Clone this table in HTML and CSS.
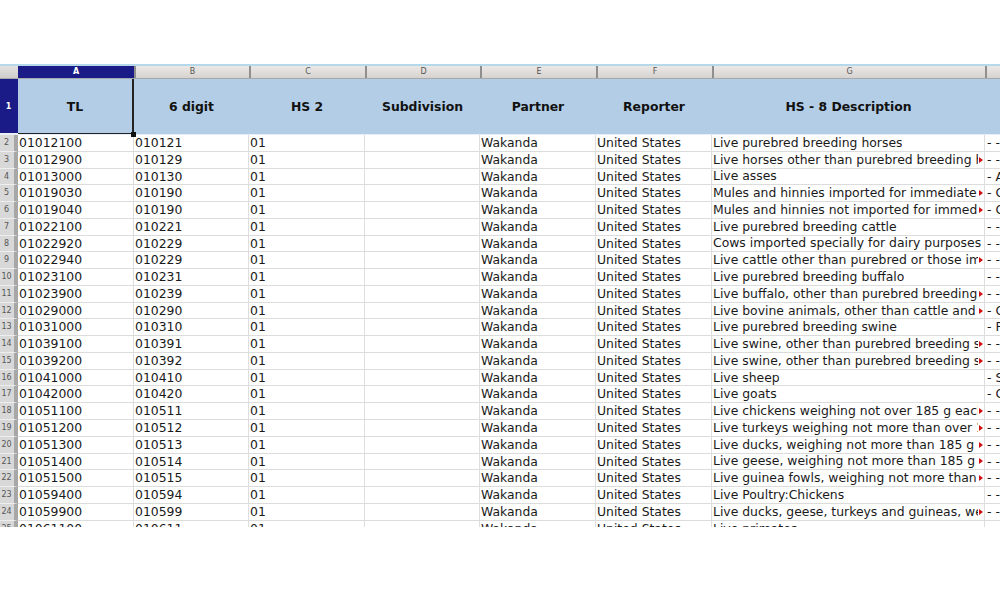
FILE: index.html
```html
<!DOCTYPE html>
<html>
<head>
<meta charset="utf-8">
<link rel="stylesheet" href="styles.css">
</head>
<body>
<div class="sheet">
  <div class="row letters">
    <div class="corner"></div>
    <div class="lt sel-lt">A</div>
    <div class="lt">B</div>
    <div class="lt">C</div>
    <div class="lt">D</div>
    <div class="lt">E</div>
    <div class="lt">F</div>
    <div class="lt">G</div>
    <div class="lt"></div>
  </div>
  <div class="row head">
    <div class="rn sel-rn">1</div>
    <div class="hc sel">TL</div>
    <div class="hc">6 digit</div>
    <div class="hc">HS 2</div>
    <div class="hc">Subdivision</div>
    <div class="hc">Partner</div>
    <div class="hc">Reporter</div>
    <div class="hc">HS - 8 Description</div>
    <div class="hc"></div>
  </div>
  <div class="row"><div class="rn">2</div><div class="c">01012100</div><div class="c">010121</div><div class="c">01</div><div class="c"></div><div class="c">Wakanda</div><div class="c">United States</div><div class="c d"><span class="t">Live purebred breeding horses</span></div><div class="c h">- -</div></div>
  <div class="row"><div class="rn">3</div><div class="c">01012900</div><div class="c">010129</div><div class="c">01</div><div class="c"></div><div class="c">Wakanda</div><div class="c">United States</div><div class="c d cut"><span class="t">Live horses other than purebred breeding horses</span></div><div class="c h">- -</div></div>
  <div class="row"><div class="rn">4</div><div class="c">01013000</div><div class="c">010130</div><div class="c">01</div><div class="c"></div><div class="c">Wakanda</div><div class="c">United States</div><div class="c d"><span class="t">Live asses</span></div><div class="c h">- A</div></div>
  <div class="row"><div class="rn">5</div><div class="c">01019030</div><div class="c">010190</div><div class="c">01</div><div class="c"></div><div class="c">Wakanda</div><div class="c">United States</div><div class="c d cut"><span class="t">Mules and hinnies imported for immediate slaughter</span></div><div class="c h">- O</div></div>
  <div class="row"><div class="rn">6</div><div class="c">01019040</div><div class="c">010190</div><div class="c">01</div><div class="c"></div><div class="c">Wakanda</div><div class="c">United States</div><div class="c d cut"><span class="t">Mules and hinnies not imported for immediate slaughter</span></div><div class="c h">- O</div></div>
  <div class="row"><div class="rn">7</div><div class="c">01022100</div><div class="c">010221</div><div class="c">01</div><div class="c"></div><div class="c">Wakanda</div><div class="c">United States</div><div class="c d"><span class="t">Live purebred breeding cattle</span></div><div class="c h">- -</div></div>
  <div class="row"><div class="rn">8</div><div class="c">01022920</div><div class="c">010229</div><div class="c">01</div><div class="c"></div><div class="c">Wakanda</div><div class="c">United States</div><div class="c d"><span class="t">Cows imported specially for dairy purposes</span></div><div class="c h">- -</div></div>
  <div class="row"><div class="rn">9</div><div class="c">01022940</div><div class="c">010229</div><div class="c">01</div><div class="c"></div><div class="c">Wakanda</div><div class="c">United States</div><div class="c d cut"><span class="t">Live cattle other than purebred or those imported for dairy</span></div><div class="c h">- -</div></div>
  <div class="row"><div class="rn">10</div><div class="c">01023100</div><div class="c">010231</div><div class="c">01</div><div class="c"></div><div class="c">Wakanda</div><div class="c">United States</div><div class="c d"><span class="t">Live purebred breeding buffalo</span></div><div class="c h">- -</div></div>
  <div class="row"><div class="rn">11</div><div class="c">01023900</div><div class="c">010239</div><div class="c">01</div><div class="c"></div><div class="c">Wakanda</div><div class="c">United States</div><div class="c d cut"><span class="t">Live buffalo, other than purebred breeding animals</span></div><div class="c h">- -</div></div>
  <div class="row"><div class="rn">12</div><div class="c">01029000</div><div class="c">010290</div><div class="c">01</div><div class="c"></div><div class="c">Wakanda</div><div class="c">United States</div><div class="c d cut"><span class="t">Live bovine animals, other than cattle and buffalo</span></div><div class="c h">- O</div></div>
  <div class="row"><div class="rn">13</div><div class="c">01031000</div><div class="c">010310</div><div class="c">01</div><div class="c"></div><div class="c">Wakanda</div><div class="c">United States</div><div class="c d"><span class="t">Live purebred breeding swine</span></div><div class="c h">- P</div></div>
  <div class="row"><div class="rn">14</div><div class="c">01039100</div><div class="c">010391</div><div class="c">01</div><div class="c"></div><div class="c">Wakanda</div><div class="c">United States</div><div class="c d cut"><span class="t">Live swine, other than purebred breeding swine, weighing less than 50 kg</span></div><div class="c h">- -</div></div>
  <div class="row"><div class="rn">15</div><div class="c">01039200</div><div class="c">010392</div><div class="c">01</div><div class="c"></div><div class="c">Wakanda</div><div class="c">United States</div><div class="c d cut"><span class="t">Live swine, other than purebred breeding swine, weighing 50 kg or more</span></div><div class="c h">- -</div></div>
  <div class="row"><div class="rn">16</div><div class="c">01041000</div><div class="c">010410</div><div class="c">01</div><div class="c"></div><div class="c">Wakanda</div><div class="c">United States</div><div class="c d"><span class="t">Live sheep</span></div><div class="c h">- S</div></div>
  <div class="row"><div class="rn">17</div><div class="c">01042000</div><div class="c">010420</div><div class="c">01</div><div class="c"></div><div class="c">Wakanda</div><div class="c">United States</div><div class="c d"><span class="t">Live goats</span></div><div class="c h">- G</div></div>
  <div class="row"><div class="rn">18</div><div class="c">01051100</div><div class="c">010511</div><div class="c">01</div><div class="c"></div><div class="c">Wakanda</div><div class="c">United States</div><div class="c d cut"><span class="t">Live chickens weighing not over 185 g each, other</span></div><div class="c h">- -</div></div>
  <div class="row"><div class="rn">19</div><div class="c">01051200</div><div class="c">010512</div><div class="c">01</div><div class="c"></div><div class="c">Wakanda</div><div class="c">United States</div><div class="c d cut"><span class="t">Live turkeys weighing not more than over 185 g each</span></div><div class="c h">- -</div></div>
  <div class="row"><div class="rn">20</div><div class="c">01051300</div><div class="c">010513</div><div class="c">01</div><div class="c"></div><div class="c">Wakanda</div><div class="c">United States</div><div class="c d cut"><span class="t">Live ducks, weighing not more than 185 g each</span></div><div class="c h">- -</div></div>
  <div class="row"><div class="rn">21</div><div class="c">01051400</div><div class="c">010514</div><div class="c">01</div><div class="c"></div><div class="c">Wakanda</div><div class="c">United States</div><div class="c d cut"><span class="t">Live geese, weighing not more than 185 g each</span></div><div class="c h">- -</div></div>
  <div class="row"><div class="rn">22</div><div class="c">01051500</div><div class="c">010515</div><div class="c">01</div><div class="c"></div><div class="c">Wakanda</div><div class="c">United States</div><div class="c d cut"><span class="t">Live guinea fowls, weighing not more than 185 g each</span></div><div class="c h">- -</div></div>
  <div class="row"><div class="rn">23</div><div class="c">01059400</div><div class="c">010594</div><div class="c">01</div><div class="c"></div><div class="c">Wakanda</div><div class="c">United States</div><div class="c d"><span class="t">Live Poultry:Chickens</span></div><div class="c h">- -</div></div>
  <div class="row"><div class="rn">24</div><div class="c">01059900</div><div class="c">010599</div><div class="c">01</div><div class="c"></div><div class="c">Wakanda</div><div class="c">United States</div><div class="c d cut"><span class="t">Live ducks, geese, turkeys and guineas, weighing more than 185 g</span></div><div class="c h">- -</div></div>
  <div class="row"><div class="rn">25</div><div class="c">01061100</div><div class="c">010611</div><div class="c">01</div><div class="c"></div><div class="c">Wakanda</div><div class="c">United States</div><div class="c d"><span class="t">Live primates</span></div><div class="c h">- -</div></div>
</div>
</body>
</html>
```

FILE: styles.css
```css
html, body {
  margin: 0;
  padding: 0;
  background: #ffffff;
}

body {
  padding-top: 64px;
  font-family: "DejaVu Sans", "Liberation Sans", sans-serif;
}

.sheet {
  height: 463px;
  overflow: hidden;
  border-top: 2px solid #b5d9ea;
  box-sizing: border-box;
}

.row {
  display: grid;
  grid-template-columns: 18px 116px 115px 116px 115px 116px 116px 273px 15px;
  height: 16.77px;
}

/* column letter bar */
.letters {
  height: 12px;
  background: linear-gradient(#ebe8e6, #d6d2cf);
  border-bottom: 1px solid #a8a8a8;
}

.corner {
  background: linear-gradient(#e4e2e0, #cfcdcb);
}

.lt {
  font-size: 8px;
  line-height: 12px;
  text-align: center;
  color: #555;
  border-left: 2px solid #8e8e8e;
  box-sizing: border-box;
}

.sel-lt {
  background: #1b1b88;
  color: #fff;
  font-weight: bold;
  border-left: none;
}

/* header row */
.head {
  height: 56px;
  background: #b2cde5;
  border-bottom: 1px solid #e6eef5;
  box-sizing: border-box;
}

.hc {
  font-weight: bold;
  font-size: 12.4px;
  color: #111;
  display: flex;
  align-items: center;
  justify-content: center;
  white-space: nowrap;
}

.sel {
  position: relative;
  border-right: 2px solid #222;
  border-bottom: 1px solid #222;
}

.sel::after {
  content: "";
  position: absolute;
  right: -4px;
  bottom: -4px;
  width: 5px;
  height: 5px;
  background: #111;
}

/* row numbers */
.rn {
  font-size: 8px;
  color: #555;
  text-align: center;
  line-height: 16px;
  background: #d8d8d8;
  border-right: 4px solid #a7a7a7;
  border-bottom: 1px solid #eeeeee;
  box-sizing: border-box;
  padding-right: 1px;
  overflow: hidden;
}

.sel-rn {
  background: #1b1b88;
  color: #fff;
  font-weight: bold;
  border-right: none;
  line-height: 56px;
}

/* data cells */
.c {
  font-size: 12.4px;
  line-height: 16px;
  color: #1a1a1a;
  padding-left: 1px;
  white-space: nowrap;
  overflow: hidden;
  border-right: 1px solid #dedede;
  border-bottom: 1px solid #dcdcdc;
  box-sizing: border-box;
}

.d {
  display: flex;
  align-items: center;
  gap: 1px;
}

.t {
  display: block;
  overflow: hidden;
  white-space: nowrap;
  flex: 0 1 auto;
  min-width: 0;
}

.cut .t {
  max-width: 265px;
}

.cut::after {
  content: "";
  flex: 0 0 auto;
  width: 0;
  height: 0;
  border-left: 4px solid #d01010;
  border-top: 3px solid transparent;
  border-bottom: 3px solid transparent;
}

.h {
  padding-left: 2px;
  border-right: none;
}
```
